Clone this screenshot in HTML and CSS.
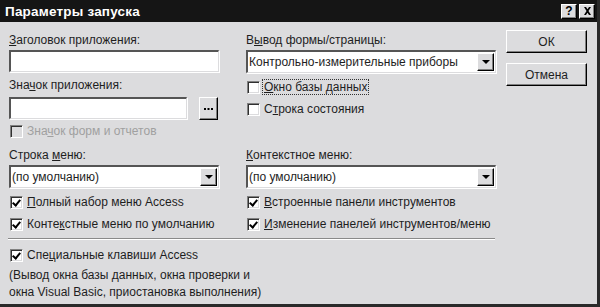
FILE: index.html
```html
<!DOCTYPE html>
<html lang="ru">
<head>
<meta charset="utf-8">
<link rel="stylesheet" href="styles.css">
</head>
<body>
<div class="dialog">
  <div class="titlebar">
    <span class="title">Параметры запуска</span>
    <div class="tbtns">
      <span class="tbtn help">?</span>
      <span class="tbtn close">
        <svg width="9" height="8" viewBox="0 0 9 8"><path d="M1 0h2l1.5 2.2L6 0h2L5.5 4 8 8H6L4.5 5.8 3 8H1l2.5-4z" fill="#000"/></svg>
      </span>
    </div>
  </div>
  <div class="main">
    <div class="left">
      <div class="grid top">
        <div class="col">
          <div class="label"><u>З</u>аголовок приложения:</div>
          <div class="field"></div>
          <div class="label l2">Зна<u>ч</u>ок приложения:</div>
          <div class="iconrow">
            <div class="field short"></div>
            <div class="btn dots"><svg width="9" height="2" viewBox="0 0 9 2"><rect x="0" y="0" width="2" height="2" fill="#000"/><rect x="3.5" y="0" width="2" height="2" fill="#000"/><rect x="7" y="0" width="2" height="2" fill="#000"/></svg></div>
          </div>
          <div class="cb disabled cbfirst"><span class="box"></span><span>Зна<u>ч</u>ок форм и отчетов</span></div>
        </div>
        <div class="col">
          <div class="label">В<u>ы</u>вод формы/страницы:</div>
          <div class="combo"><span class="ctext">Контрольно-измерительные приборы</span><span class="arrow"><i></i></span></div>
          <div class="cb cbr1"><span class="box"></span><span class="focus"><u>О</u>кно базы данных</span></div>
          <div class="cb cbr2"><span class="box"></span><span>С<u>т</u>рока состояния</span></div>
        </div>
      </div>
      <div class="grid mid">
        <div class="col">
          <div class="label">Строка <u>м</u>еню:</div>
          <div class="combo"><span class="ctext">(по умолчанию)</span><span class="arrow"><i></i></span></div>
          <div class="cb cbm1"><span class="box checked"></span><span><u>П</u>олный набор меню Access</span></div>
          <div class="cb cbm2"><span class="box checked"></span><span>Конте<u>к</u>стные меню по умолчанию</span></div>
        </div>
        <div class="col">
          <div class="label"><u>К</u>онтекстное меню:</div>
          <div class="combo"><span class="ctext">(по умолчанию)</span><span class="arrow"><i></i></span></div>
          <div class="cb cbm1"><span class="box checked"></span><span><u>В</u>строенные панели инструментов</span></div>
          <div class="cb cbm2"><span class="box checked"></span><span><u>И</u>зменение панелей инструментов/меню</span></div>
        </div>
      </div>
      <div class="sep"></div>
      <div class="cb cbs"><span class="box checked"></span><span>Спе<u>ц</u>иальные клавиши Access</span></div>
      <p class="note">(Вывод окна базы данных, окна проверки и<br>окна Visual Basic, приостановка выполнения)</p>
    </div>
    <div class="buttons">
      <div class="btn big">ОК</div>
      <div class="btn big">Отмена</div>
    </div>
  </div>
</div>
</body>
</html>
```
FILE: styles.css
```css
* { box-sizing: border-box; }
html, body { margin: 0; padding: 0; background: #dcdcde; }
body {
  font-family: "Liberation Sans", Arial, sans-serif;
  font-size: 12px;
  color: #1e1e1e;
}
u { text-decoration: underline; text-underline-offset: 1px; }
.dialog {
  width: 600px;
  height: 307px;
  background: #dcdcde;
  border-right: 3px solid #2a2a2a;
  border-bottom: 3px solid #2a2a2a;
  display: flex;
  flex-direction: column;
  overflow: hidden;
}
.titlebar {
  height: 22px;
  background: #151515;
  display: flex;
  align-items: center;
  justify-content: space-between;
  padding: 0 2px 0 5px;
  flex: none;
}
.title {
  color: #fff;
  font-weight: bold;
  font-size: 13.5px;
  letter-spacing: 0.2px;
}
.tbtns { display: flex; gap: 2px; }
.tbtn {
  width: 16px;
  height: 15px;
  background: #dcdcde;
  border-top: 1px solid #fff;
  border-left: 1px solid #fff;
  border-right: 1px solid #000;
  border-bottom: 1px solid #000;
  box-shadow: inset -1px -1px 0 #808080;
  display: flex;
  align-items: center;
  justify-content: center;
  font-weight: bold;
  font-size: 12px;
  line-height: 1;
  color: #000;
}
.main {
  flex: 1;
  display: flex;
  padding: 11px 0 0 9px;
}
.left { width: 487px; flex: none; }
.grid {
  display: grid;
  grid-template-columns: 210px 250px;
  column-gap: 27px;
}
.col { display: flex; flex-direction: column; }
.label { height: 14px; line-height: 14px; margin-bottom: 3px; white-space: nowrap; }
.l2 { margin-top: 6px; margin-bottom: 5px; }
.field {
  height: 22px;
  background: #fff;
  border-top: 2px solid #555;
  border-left: 2px solid #555;
  border-right: 1px solid #dcdcde;
  border-bottom: 1px solid #dcdcde;
  box-shadow: 1px 1px 0 #fff;
}
.field.short { width: 178px; }
.iconrow { display: flex; align-items: center; gap: 12px; height: 22px; }
.btn {
  background: #dcdcde;
  border-top: 1px solid #fff;
  border-left: 1px solid #fff;
  border-right: 1px solid #000;
  border-bottom: 1px solid #000;
  box-shadow: inset -1px -1px 0 #808080;
  display: flex;
  align-items: center;
  justify-content: center;
}
.dots {
  width: 19px;
  height: 23px;
  padding-top: 2px;
}
.combo {
  height: 23px;
  background: #fff;
  border-top: 2px solid #555;
  border-left: 2px solid #555;
  border-right: 1px solid #dcdcde;
  border-bottom: 1px solid #dcdcde;
  box-shadow: 1px 1px 0 #fff;
  display: flex;
  align-items: center;
  justify-content: space-between;
  padding-left: 1px;
}
.ctext { white-space: nowrap; }
.arrow {
  width: 17px;
  height: 18px;
  margin-right: 1px;
  background: #dcdcde;
  border-top: 1px solid #fff;
  border-left: 1px solid #fff;
  border-right: 1px solid #000;
  border-bottom: 1px solid #000;
  box-shadow: inset -1px -1px 0 #808080;
  display: flex;
  align-items: center;
  justify-content: center;
}
.arrow i {
  width: 0; height: 0;
  border-left: 4px solid transparent;
  border-right: 4px solid transparent;
  border-top: 4px solid #000;
}
.cb {
  display: flex;
  align-items: center;
  height: 14px;
  line-height: 14px;
  white-space: nowrap;
  padding-left: 1px;
}
.box {
  width: 13px;
  height: 13px;
  flex: none;
  margin-right: 4px;
  background: #fff;
  border-top: 1px solid #808080;
  border-left: 1px solid #808080;
  border-right: 1px solid #fff;
  border-bottom: 1px solid #fff;
  box-shadow: inset 1px 1px 0 #303030, inset -1px -1px 0 #dcdcde;
  position: relative;
}
.box.checked::after {
  content: "";
  position: absolute;
  left: 3px;
  top: 1px;
  width: 3px;
  height: 6px;
  border-right: 2px solid #000;
  border-bottom: 2px solid #000;
  transform: rotate(40deg);
}
.disabled { color: #a0a0a0; }
.disabled .box { background: #dcdcde; }
.focus { outline: 1px dotted #333; outline-offset: 0; padding: 0 1px; margin-left: -1px; }
.cbfirst { margin-top: 5px; }
.cbr1 { margin-top: 7px; }
.cbr2 { margin-top: 8px; }
.mid { margin-top: 10px; }
.cbm1 { margin-top: 7px; }
.cbm2 { margin-top: 8px; }
.sep {
  margin: 7px 0 0 -1px;
  width: 487px;
  height: 2px;
  border-top: 1px solid #8a8a8a;
  border-bottom: 1px solid #fff;
}
.cbs { margin-top: 8px; }
.note { margin: 5px 0 0 0; line-height: 17px; }
.buttons {
  margin-left: 10px;
  margin-top: -3px;
  display: flex;
  flex-direction: column;
  gap: 10px;
}
.btn.big {
  width: 81px;
  height: 23px;
}
```
